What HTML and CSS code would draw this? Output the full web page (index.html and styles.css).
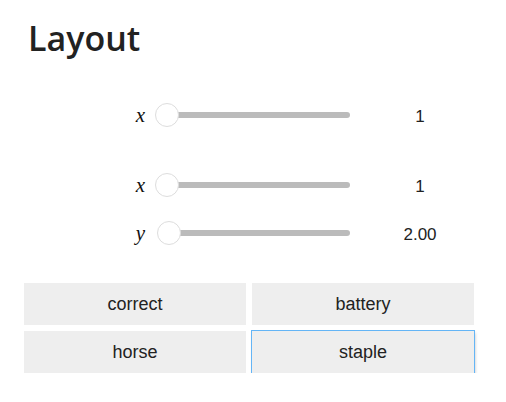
FILE: index.html
```html
<!DOCTYPE html>
<html>
<head>
<meta charset="utf-8">
<link rel="stylesheet" href="styles.css">
</head>
<body>
<div class="page">
  <h1 class="title">Layout</h1>
  <div class="group group-first">
    <div class="row">
      <div class="label"><i>x</i></div>
      <div class="slider"><div class="track"></div><div class="thumb"></div></div>
      <div class="value">1</div>
    </div>
  </div>
  <div class="group group-second">
    <div class="row">
      <div class="label"><i>x</i></div>
      <div class="slider"><div class="track"></div><div class="thumb"></div></div>
      <div class="value">1</div>
    </div>
    <div class="row">
      <div class="label"><i>y</i></div>
      <div class="slider"><div class="track"></div><div class="thumb thumb-y"></div></div>
      <div class="value">2.00</div>
    </div>
  </div>
  <div class="buttons">
    <button class="btn">correct</button>
    <button class="btn">battery</button>
    <button class="btn">horse</button>
    <button class="btn btn-focus">staple</button>
  </div>
</div>
</body>
</html>
```
FILE: styles.css
```css
html, body {
  margin: 0;
  padding: 0;
  background: #fff;
}
.page {
  padding: 0 0 0 24px;
  width: 482px;
  font-family: "Liberation Sans", Arial, sans-serif;
  color: #222;
}
.title {
  margin: 0;
  padding: 16px 0 0 4px;
  height: 44px;
  font-family: "Open Sans", "Noto Sans", sans-serif;
  font-weight: 600;
  font-size: 34px;
  line-height: 44px;
  color: #222;
  letter-spacing: 0;
}
.group {
  display: flex;
  flex-direction: column;
  gap: 16px;
}
.group-first {
  margin-top: 39px;
}
.group-second {
  margin-top: 38px;
}
.row {
  display: flex;
  align-items: center;
  height: 32px;
}
.label {
  width: 121px;
  text-align: right;
  font-family: "Liberation Serif", "DejaVu Serif", serif;
  font-size: 21px;
  line-height: 32px;
  color: #111;
}
.slider {
  position: relative;
  margin-left: 10px;
  width: 195px;
  height: 32px;
}
.track {
  position: absolute;
  left: 6px;
  right: 0;
  top: 13px;
  height: 6px;
  border-radius: 3px;
  background: #bbb;
}
.thumb {
  position: absolute;
  left: 0;
  top: 4px;
  width: 22px;
  height: 22px;
  border-radius: 50%;
  background: #fff;
  border: 1px solid #ddd;
}
.thumb-y {
  left: 2px;
}
.value {
  width: 140px;
  padding-top: 4px;
  text-align: center;
  font-size: 17px;
  color: #222;
}
.buttons {
  margin-top: 34px;
  display: grid;
  grid-template-columns: 222px 222px;
  grid-auto-rows: 42px;
  gap: 6px;
}
.btn {
  margin: 0;
  border: none;
  background: #eee;
  font-family: "Liberation Sans", Arial, sans-serif;
  font-size: 18px;
  color: #222;
  padding: 0;
}
.btn-focus {
  outline: 1px solid #64b5f6;
  outline-offset: 0;
  box-shadow: 1px 2px 3px rgba(0,0,0,0.25);
}
```
